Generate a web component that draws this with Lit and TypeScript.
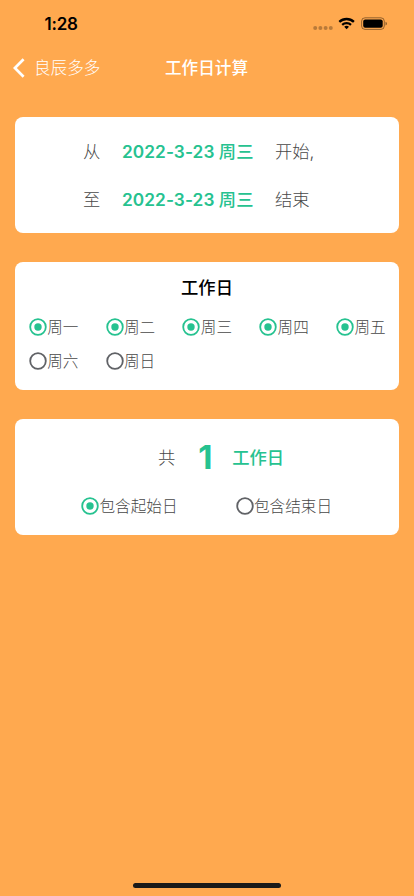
import { LitElement, html, css, svg } from "lit";
import { customElement, property, state } from "lit/decorators.js";

@customElement("radio-option")
class RadioOption extends LitElement {
  @property() label = "";
  @property({ type: Boolean }) checked = false;

  static styles = css`
    :host { display: flex; align-items: center; height: 18px; color: #484848; white-space: nowrap; }
    .icon { width: 18px; height: 18px; flex: none; display: block; fill: none; stroke: #606266; stroke-width: 1.8; }
    .icon.on { stroke: #26c290; }
    .dot { fill: #26c290; stroke: none; }
    .label { font-size: 15.6px; line-height: 18px; padding-top: 2px; margin-left: 0.5px; font-weight: 300; }
  `;

  render() {
    return html`
      <svg class="icon ${this.checked ? "on" : ""}" viewBox="0 0 18 18">
        <circle cx="9" cy="9" r="7.8"></circle>
        ${this.checked ? svg`<circle class="dot" cx="9" cy="9" r="3.7"></circle>` : ""}
      </svg>
      <span class="label">${this.label}</span>
    `;
  }
}

@customElement("app-root")
class AppRoot extends LitElement {
  @state() days = [
    { name: "周一", on: true },
    { name: "周二", on: true },
    { name: "周三", on: true },
    { name: "周四", on: true },
    { name: "周五", on: true },
    { name: "周六", on: false },
    { name: "周日", on: false },
  ];

  static styles = css`
    :host {
      display: flex; flex-direction: column; box-sizing: border-box;
      width: 100%; height: 896px; overflow: hidden; background: #ffa94f; color: #484848;
      font-family: Inter, "Noto Sans CJK SC", sans-serif; font-weight: 300;
    }
    .status { display: flex; justify-content: space-between; height: 44px; box-sizing: border-box; padding: 13px 26px 0 44.5px; color: #000; }
    .time { font-size: 17px; line-height: 22px; font-weight: 600; letter-spacing: -0.2px; }
    .icons { width: 75px; height: 20px; display: block; }
    .nav { display: grid; grid-template-columns: 1fr auto 1fr; align-items: center; height: 46px; margin-bottom: -2px; padding: 0 14px 0 13px; color: #fff; }
    .back { display: flex; align-items: center; gap: 9px; font-size: 16.6px; line-height: 24px; padding-top: 1px; }
    .chevron { width: 12px; height: 20px; fill: none; stroke: #fff; stroke-width: 2.7; }
    .title { font-size: 16.6px; line-height: 24px; font-weight: 500; padding-top: 1px; }
    .content { display: flex; flex-direction: column; gap: 29px; padding: 29.4px 15px 0; flex: 1; }
    .card { background: #fff; border-radius: 8px; box-sizing: border-box; }
    .range { height: 116px; padding-top: 2px; display: flex; flex-direction: column; justify-content: center; gap: 24px; }
    .row { display: grid; grid-template-columns: 17px 131px auto; column-gap: 22px; padding-left: 68px; font-size: 17.3px; line-height: 24px; white-space: nowrap; }
    .date { color: #26c290; font-weight: 600; letter-spacing: 0.05px; }
    .weekday { font-weight: 500; }
    .week { height: 127.4px; padding: 13px 14px 0; }
    .heading { text-align: center; color: #000; font-size: 17.3px; line-height: 26px; font-weight: 500; }
    .days { display: grid; grid-template-columns: repeat(5, 76.8px); row-gap: 16px; margin-top: 17px; margin-left: -0.3px; }
    .total { height: 116px; padding-top: 18px; }
    .sum { display: flex; align-items: center; height: 40px; padding-left: 143px; font-size: 17.3px; }
    .count { color: #26c290; font: 700 33px/40px Inter, sans-serif; width: 20px; margin: 0 17px 0 20px; text-align: center; }
    .unit { color: #26c290; font-weight: 500; }
    .options { display: grid; grid-template-columns: 154.5px auto; padding-left: 66px; margin-top: 20px; }
    .home { align-self: center; flex: none; width: 148px; height: 5px; border-radius: 3px; background: #1b1a19; margin-bottom: 8px; }
  `;

  renderRange(prefix: string, suffix: string) {
    return html`<div class="row"><span>${prefix}</span><span class="date">2022-3-23 <span class="weekday">周三</span></span><span>${suffix}</span></div>`;
  }

  render() {
    return html`
      <header class="status">
        <span class="time">1:28</span>
        <svg class="icons" viewBox="0 0 75 20">
          <g fill="#000" opacity=".27">
            <circle cx="2.2" cy="15" r="2"></circle><circle cx="7.4" cy="15" r="2"></circle>
            <circle cx="12.6" cy="15" r="2"></circle><circle cx="17.8" cy="15" r="2"></circle>
          </g>
          <g fill="none" stroke="#000" stroke-width="2.3">
            <path d="M26.3 8.9a10.6 10.6 0 0 1 14.6 0"></path>
            <path d="M29.2 11.8a6.5 6.5 0 0 1 8.8 0"></path>
          </g>
          <path d="M31.2 13.7q2.4-1.9 4.8 0l-2.4 2.5z"></path>
          <rect x="48.6" y="4.8" width="22.7" height="11.6" rx="3.4" fill="none" stroke="#000" stroke-opacity=".42"></rect>
          <rect x="50.2" y="6.4" width="19.5" height="8.4" rx="2"></rect>
          <path d="M72.5 8.7q1.5.5 1.5 1.9t-1.5 1.9z" opacity=".45"></path>
        </svg>
      </header>
      <nav class="nav">
        <div class="back">
          <svg class="chevron" viewBox="0 0 12 20"><path d="M10.6 1.3 1.9 10l8.7 8.7"></path></svg>
          <span>良辰多多</span>
        </div>
        <div class="title">工作日计算</div>
      </nav>
      <main class="content">
        <section class="card range">
          ${this.renderRange("从", "开始,")}
          ${this.renderRange("至", "结束")}
        </section>
        <section class="card week">
          <div class="heading">工作日</div>
          <div class="days">
            ${this.days.map((d) => html`<radio-option .label=${d.name} .checked=${d.on}></radio-option>`)}
          </div>
        </section>
        <section class="card total">
          <div class="sum"><span>共</span><span class="count">1</span><span class="unit">工作日</span></div>
          <div class="options">
            <radio-option label="包含起始日" checked></radio-option>
            <radio-option label="包含结束日"></radio-option>
          </div>
        </section>
      </main>
      <div class="home"></div>
    `;
  }
}
